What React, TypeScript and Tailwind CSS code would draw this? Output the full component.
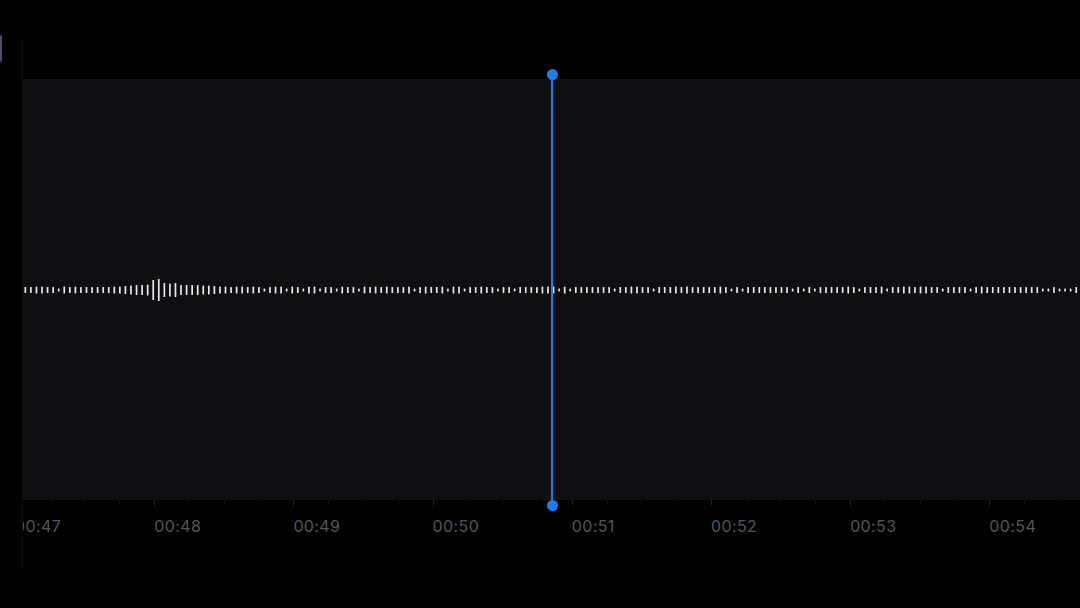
import React from "react";

const SECOND_WIDTH = 139.2;
const BAR_GAP = 5.56;
const PANEL_WIDTH = 1057;
const PANEL_HEIGHT = 421;

// loud burst near the start of the clip
const PEAK: Record<number, number> = {
  17: 7,
  18: 8,
  19: 9,
  20: 10,
  21: 10,
  22: 11,
  23: 20,
  24: 22,
  25: 14,
  26: 13,
  27: 14,
  28: 10,
  29: 10,
  30: 10,
  31: 10,
  32: 9,
  33: 9,
  34: 8,
  35: 7,
  36: 7,
};

function seeded(i: number) {
  const x = Math.sin(i * 12.9898 + 4.1) * 43758.5453;
  return x - Math.floor(x);
}

function barHeight(i: number) {
  if (PEAK[i]) return PEAK[i];
  const r = seeded(i);
  if (r < 0.2) return 3;
  if (r < 0.75) return 6;
  return 7;
}

function Waveform() {
  const count = Math.floor(PANEL_WIDTH / BAR_GAP);
  const mid = 211;
  return (
    <svg width={PANEL_WIDTH} height={PANEL_HEIGHT} className="block">
      {Array.from({ length: count }).map((_, i) => {
        const h = barHeight(i);
        return (
          <rect
            key={i}
            x={1.5 + i * BAR_GAP}
            y={mid - h / 2}
            width={1.7}
            height={h}
            rx={0.6}
            fill="#e9e9ec"
          />
        );
      })}
    </svg>
  );
}

const LABELS = ["00:47", "00:48", "00:49", "00:50", "00:51", "00:52", "00:53", "00:54"];

function TimeAxis() {
  return (
    <div className="flex ml-[-8px]">
      {LABELS.map((t) => (
        <div key={t} className="shrink-0" style={{ width: SECOND_WIDTH }}>
          <div className="flex h-[10px] items-start">
            {[0, 1, 2, 3].map((k) => (
              <div key={k} className="w-1/4">
                <div className={k === 0 ? "w-px h-[7px] bg-[#1c1c20]" : "w-px h-[5px] bg-[#141417]"} />
              </div>
            ))}
          </div>
          <div
            className="mt-[6px] text-[16px] leading-[20px] text-[#55555a] tracking-[0.4px]"
            style={{ fontFamily: "Inter, 'Open Sans', sans-serif" }}
          >
            {t}
          </div>
        </div>
      ))}
    </div>
  );
}

export default function App() {
  return (
    <div className="w-[1080px] h-[608px] bg-black flex overflow-hidden relative">
      {/* gutter */}
      <div className="w-[22px] shrink-0">
        <div className="mt-[35px] h-[27px] w-[2px] rounded-r bg-[#4a4f7a]" />
      </div>

      {/* timeline */}
      <div className="flex-1 mt-[40px] h-[530px] border-l border-[#121216] flex flex-col overflow-hidden">
        <div className="h-[39px] shrink-0" />
        <div className="h-[421px] shrink-0 bg-[#0f0f11]">
          <Waveform />
        </div>
        <TimeAxis />
      </div>

      {/* playhead */}
      <div className="absolute left-[546px] top-[69px] w-[12px] h-[442px] flex flex-col items-center">
        <div className="w-[11px] h-[11px] rounded-full bg-[#1a7ef2]" />
        <div className="w-[2px] flex-1 bg-[#1a7ef2] -my-[5px]" />
        <div className="w-[11px] h-[11px] rounded-full bg-[#1a7ef2]" />
      </div>
    </div>
  );
}
